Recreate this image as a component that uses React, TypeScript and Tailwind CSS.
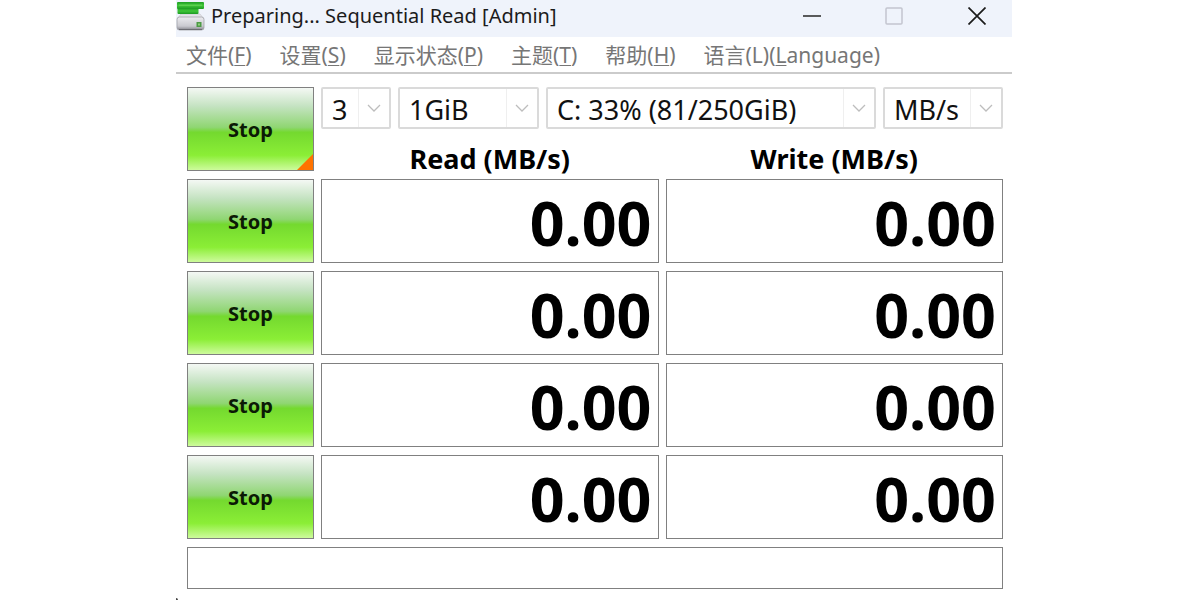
import React, { useState } from 'react'

const menuItems = [
  { label: '文件', before: '(', key: 'F', after: ')' },
  { label: '设置', before: '(', key: 'S', after: ')' },
  { label: '显示状态', before: '(', key: 'P', after: ')' },
  { label: '主题', before: '(', key: 'T', after: ')' },
  { label: '帮助', before: '(', key: 'H', after: ')' },
  { label: '语言', before: '(L)(', key: 'L', after: 'anguage)' },
]

const results = [
  { id: 'seq1m-q8', read: '0.00', write: '0.00' },
  { id: 'seq1m-q1', read: '0.00', write: '0.00' },
  { id: 'rnd4k-q32', read: '0.00', write: '0.00' },
  { id: 'rnd4k-q1', read: '0.00', write: '0.00' },
]

const DiskIcon = () => (
  <svg width="29" height="30" viewBox="0 0 29 30" aria-hidden="true">
    <defs>
      <linearGradient id="disk-green" x1="0" y1="0" x2="0" y2="1">
        <stop offset="0" stopColor="#1f9f24" />
        <stop offset="0.5" stopColor="#3fc638" />
        <stop offset="1" stopColor="#1c9a22" />
      </linearGradient>
      <linearGradient id="disk-body" x1="0" y1="0" x2="0" y2="1">
        <stop offset="0" stopColor="#ececf0" />
        <stop offset="0.7" stopColor="#cacad0" />
        <stop offset="1" stopColor="#85858c" />
      </linearGradient>
    </defs>
    <path d="M5 13h19l4 5H1z" fill="#e4e4e8" stroke="#c2c2c8" strokeWidth="0.6" />
    <rect x="1" y="16" width="27" height="13" rx="2.5" fill="url(#disk-body)" stroke="#a2a2a8" strokeWidth="0.8" />
    <path d="M3 28.5h23" stroke="#6c6c72" />
    <rect x="1.5" y="7" width="21" height="6" rx="1" fill="url(#disk-green)" />
    <rect x="1" y="1" width="27" height="7" rx="1" fill="url(#disk-green)" />
    <path d="M3 4.2h23" stroke="#62d455" strokeWidth="1.2" />
    <rect x="20.5" y="21" width="5" height="5" fill="#4c9a45" />
    <rect x="22" y="22.5" width="2" height="2" fill="#8fd07c" />
  </svg>
)

function TitleBar() {
  return (
    <header className="flex h-[37px] items-start bg-[#eff3fb]">
      <div className="flex flex-1 items-center gap-1.5">
        <DiskIcon />
        <h1 className="text-[20px] leading-[32px] whitespace-nowrap text-[#1b1b1b]">
          Preparing... Sequential Read [Admin]
        </h1>
      </div>
      <div className="flex h-8">
        <button aria-label="Minimize" className="flex w-[68px] items-center justify-center">
          <svg width="18" height="18" viewBox="0 0 18 18">
            <path d="M0 9h18" stroke="#333" strokeWidth="1.6" />
          </svg>
        </button>
        <button aria-label="Maximize" className="flex w-24 items-center justify-center">
          <svg width="18" height="18" viewBox="0 0 18 18" fill="none">
            <rect x="1" y="1" width="16" height="16" rx="1" stroke="#c3c5cf" strokeWidth="1.5" />
          </svg>
        </button>
        <button aria-label="Close" className="flex w-[70px] items-center justify-center">
          <svg width="18" height="18" viewBox="0 0 18 18">
            <path d="M0.5 0.5l17 17M17.5 0.5l-17 17" stroke="#1b1b1b" strokeWidth="1.7" />
          </svg>
        </button>
      </div>
    </header>
  )
}

function MenuBar() {
  return (
    <nav className="flex h-[37px] items-center gap-7 border-b-2 border-[#cbcbcb] px-[10px] text-[21px] leading-[30px] text-[#767676]">
      {menuItems.map(({ label, before, key, after }) => (
        <button key={label} className="whitespace-nowrap">
          {label}
          {before}
          <span className="underline decoration-1 underline-offset-2">{key}</span>
          {after}
        </button>
      ))}
    </nav>
  )
}

type SelectBoxProps = {
  label: string
  options: string[]
  className: string
}
function SelectBox({ label, options, className }: SelectBoxProps) {
  const [value, setValue] = useState(options[0])

  return (
    <div className={`relative h-[42px] rounded-xs border-2 border-[#dadada] ${className}`}>
      <select
        aria-label={label}
        value={value}
        onChange={(e) => setValue(e.target.value)}
        className="h-full w-full appearance-none bg-white pt-1 pl-[9px] text-[27px] leading-[34px] text-[#111]"
      >
        {options.map((option) => (
          <option key={option}>{option}</option>
        ))}
      </select>
      <span className="pointer-events-none absolute inset-y-0 right-0 flex w-[31px] items-center justify-center border-l border-[#efefef]">
        <svg width="14" height="8" viewBox="0 0 14 8" fill="none">
          <path d="M1 1l6 6 6-6" stroke="#bdbdbd" strokeWidth="1.3" />
        </svg>
      </span>
    </div>
  )
}

function StopButton({ corner = false }: { corner?: boolean }) {
  return (
    <button className="relative block h-[84px] w-full border border-[#808080] bg-linear-[180deg,#f4f8f4_0%,#c5e3c2_22%,#8fd672_48%,#74d92f_54%,#8bee36_82%,#cdfb9c_100%] pt-[2px] text-[20px] font-bold text-[#0b1a05]">
      Stop
      {corner && (
        <svg
          className="absolute right-0 bottom-0"
          width="16"
          height="16"
          viewBox="0 0 16 16"
          aria-hidden="true"
        >
          <path d="M16 0v16H0z" fill="#ff7300" />
        </svg>
      )}
    </button>
  )
}

function ResultCell({ value }: { value: string }) {
  return (
    <td className="border border-[#808080] p-0 pt-[3px] pr-[6px] text-right text-[61px] leading-[79px] font-bold text-black">
      {value}
    </td>
  )
}

const App = () => {
  return (
    <div className="min-h-screen bg-white pr-[188px] pl-44 font-['Noto_Sans','Noto_Sans_CJK_SC',sans-serif]">
      <TitleBar />
      <MenuBar />
      <main className="pt-[5px] pr-[2px] pl-1">
        <table className="w-full table-fixed border-separate border-spacing-x-[7px] border-spacing-y-2">
          <colgroup>
            <col className="w-[127px]" />
            <col />
            <col />
          </colgroup>
          <thead>
            <tr>
              <td rowSpan={2} className="p-0">
                <StopButton corner />
              </td>
              <td colSpan={2} className="p-0">
                <div className="flex gap-[7px]">
                  <SelectBox label="Test count" options={['3', '1', '5', '9']} className="w-[70px]" />
                  <SelectBox label="Test size" options={['1GiB', '2GiB', '4GiB']} className="w-[141px]" />
                  <SelectBox label="Drive" options={['C: 33% (81/250GiB)']} className="flex-1" />
                  <SelectBox label="Unit" options={['MB/s', 'GB/s', 'IOPS']} className="w-[120px]" />
                </div>
              </td>
            </tr>
            <tr className="h-[34px] text-[27px] leading-[24px] text-black">
              <th className="p-0 align-bottom font-bold">Read (MB/s)</th>
              <th className="p-0 align-bottom font-bold">Write (MB/s)</th>
            </tr>
          </thead>
          <tbody>
            {results.map(({ id, read, write }) => (
              <tr key={id}>
                <td className="p-0">
                  <StopButton />
                </td>
                <ResultCell value={read} />
                <ResultCell value={write} />
              </tr>
            ))}
          </tbody>
        </table>
        <div role="status" className="mx-[7px] h-[42px] border border-[#808080]" />
      </main>
      <div className="mt-[9px] size-[2px] rounded-tr-full bg-[#444]" />
    </div>
  )
}

export default App
